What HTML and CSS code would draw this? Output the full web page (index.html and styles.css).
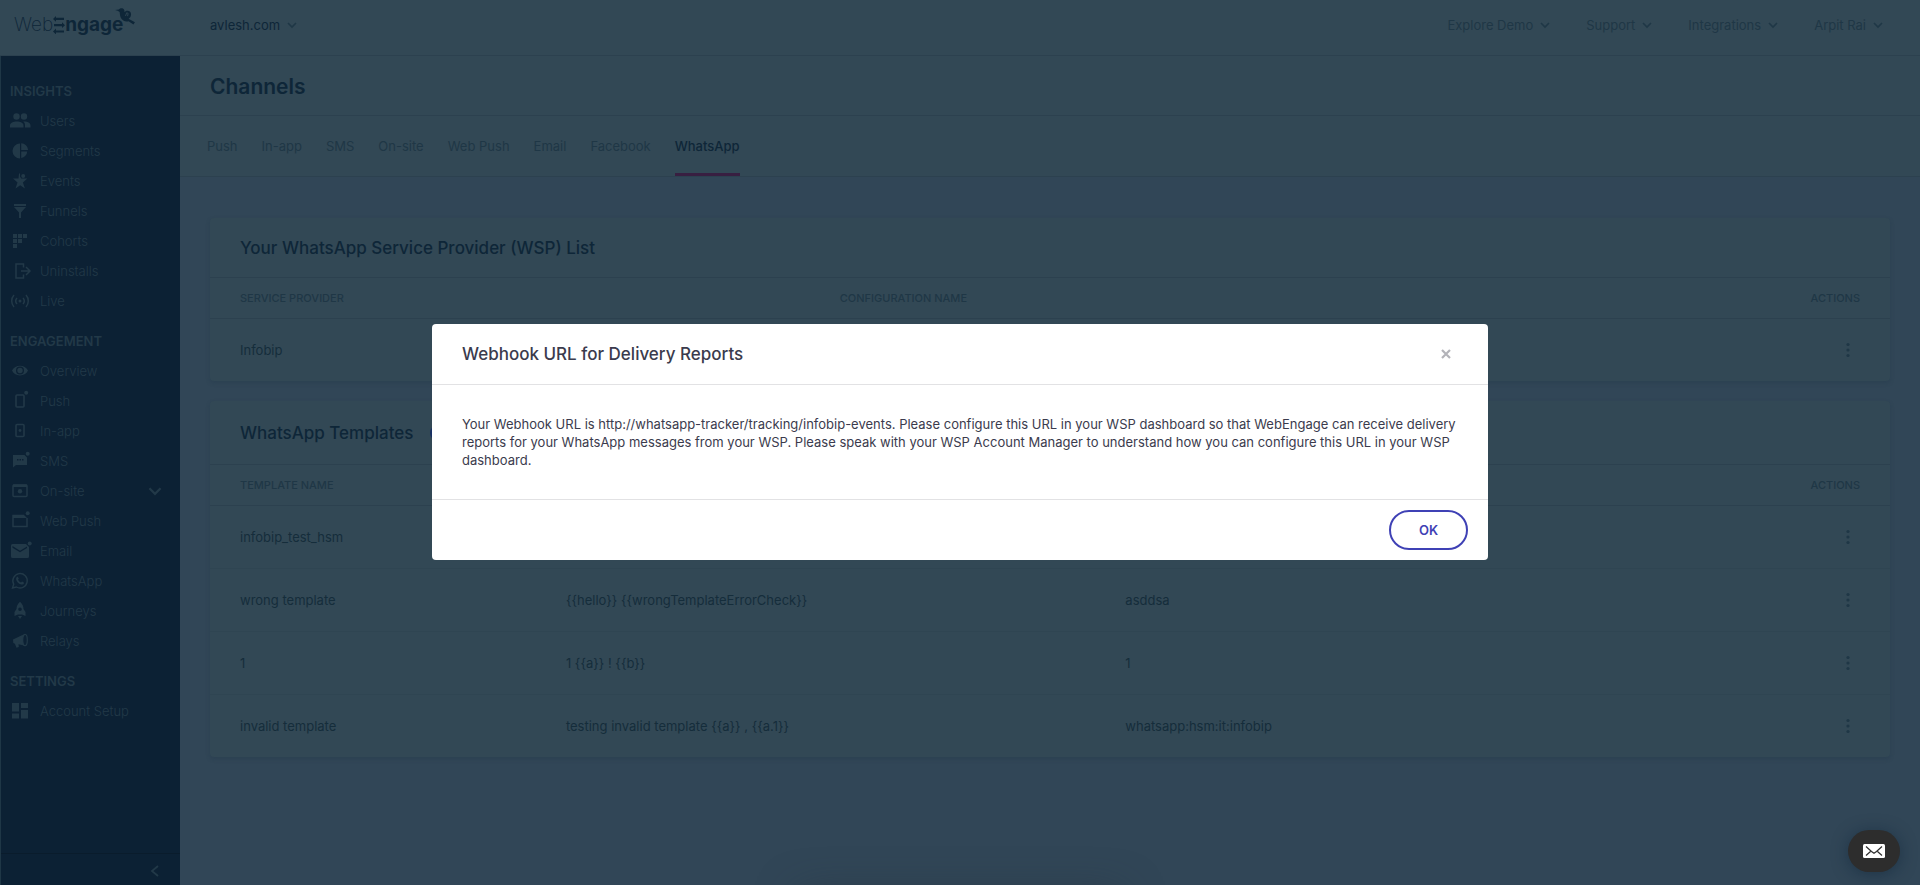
FILE: index.html
```
<!DOCTYPE html>
<html lang="en">
<head>
    <meta charset="UTF-8">
    <meta name="viewport" content="width=device-width, initial-scale=1.0">
    <title>Channels - WebEngage</title>
    <link rel="stylesheet" href="styles.css">
</head>
<body>
    <svg class="sprite" aria-hidden="true">
        <symbol id="chevron" viewBox="0 0 10 10"><path d="M1 3l4 4 4-4" fill="none" stroke="currentColor" stroke-width="1.600"/></symbol>
        <symbol id="dots" viewBox="0 0 4 16"><circle cx="2" cy="2.500" r="1.600"/><circle cx="2" cy="8" r="1.600"/><circle cx="2" cy="13.500" r="1.600"/></symbol>
    </svg>

    <header class="topbar">
        <a class="logo" href="#" aria-label="WebEngage">
            <span class="logo-web">Web</span>
            <svg class="logo-e" viewBox="0 0 12 18"><path d="M3 0v1.800h8v2.200H3v1.800L0 2.900zM9 6.300v1.800H1v2.200h8v1.800l3-2.900zM3 12.600v1.800h8v2.200H3v1.800l-3-2.900z"/></svg>
            <span class="logo-engage">ngage</span>
            <svg class="logo-bird" viewBox="0 0 22 18"><path d="M0 2.200L4 1.600C5 .2 7.200-.3 8.600.7 10 1.700 10 3.200 9.800 4.600 10.500 3.600 11.800 2.900 13.200 3c2.500.1 4 2 3.600 4.300-.2 1.700-1.200 3-2.600 4.200l6.800 3.600-1.600 2.300-5.200-3.500c-2.800.8-5.800 0-7.500-2.400C5.200 9.300 5.100 6.700 4.800 4.300 3.600 3.300 2 2.600 0 2.200z"/><path d="M11 8.500l1.300-3.500 1.500.8-.6 2.800" fill="none" stroke="#324855" stroke-width=".9"/></svg>
        </a>
        <button class="menu site-menu">avlesh.com <svg><use href="#chevron"/></svg></button>
        <nav class="top-nav">
            <button class="menu">Explore Demo <svg><use href="#chevron"/></svg></button>
            <button class="menu">Support <svg><use href="#chevron"/></svg></button>
            <button class="menu">Integrations <svg><use href="#chevron"/></svg></button>
            <button class="menu">Arpit Rai <svg><use href="#chevron"/></svg></button>
        </nav>
    </header>

    <div class="layout">
        <aside class="sidebar">
            <nav>
                <h2>INSIGHTS</h2>
                <a href="#"><svg viewBox="0 0 24 20"><circle cx="8.500" cy="5.500" r="3.200"/><circle cx="16" cy="5.500" r="3.200"/><path d="M2 16.500v-2c0-2.600 3.500-4 6.800-4s6.700 1.400 6.700 4v2zM16 10.500c3.500 0 6.500 1.400 6.500 4v2H17v-2.300c0-1.500-.6-2.700-1.800-3.600z"/></svg>Users</a>
                <a href="#"><svg viewBox="0 0 24 20"><path d="M12 2.500v15a7.500 7.500 0 0 1 0-15zM13.200 2.200a7.500 7.500 0 0 1 7 6.800h-7zM13.200 10.500h6a6.800 6.800 0 0 1-6 6.500z"/></svg>Segments</a>
                <a href="#"><svg viewBox="0 0 24 20"><path d="M11 2.500l-.5 5H5l4.500 4-2 6 4.700-3.300 4.700 3.300-2-6 4.500-4h-6.200L12 5.500V2.500z"/><circle cx="15.200" cy="5" r="2"/></svg>Events</a>
                <a href="#"><svg viewBox="0 0 24 20"><path d="M6 3h12v2H6zM6 6h12l-5 5.500V17h-2v-5.500z"/></svg>Funnels</a>
                <a href="#"><svg viewBox="0 0 24 20"><path d="M5 3h4v4H5zM10 3h4v4h-4zM15 3h4v4h-4zM5 8h4v4H5zM10 8h4v4h-4zM5 13h4v4H5z"/></svg>Cohorts</a>
                <a href="#"><svg viewBox="0 0 24 20"><path d="M15.500 6.500V3H8v14h7.500v-3.500M13 10h8.500M18 6l4 4-4 4" fill="none" stroke="currentColor" stroke-width="1.500"/></svg>Uninstalls</a>
                <a href="#"><svg viewBox="0 0 24 20"><circle cx="12" cy="10" r="1.500"/><path d="M9 7a4.500 4.500 0 0 0 0 6M15 7a4.500 4.500 0 0 1 0 6M6 4a9 9 0 0 0 0 12M18 4a9 9 0 0 1 0 12" fill="none" stroke="currentColor" stroke-width="1.500"/></svg>Live</a>

                <h2>ENGAGEMENT</h2>
                <a href="#"><svg viewBox="0 0 24 20"><path fill-rule="evenodd" d="M4 9.500C7 3 17 3 20 9.500 17 16 7 16 4 9.500zM12 5.500a4 4 0 1 0 0 8 4 4 0 0 0 0-8zm0 1.300a2.700 2.700 0 1 1 0 5.400 2.700 2.700 0 0 1 0-5.400z"/></svg>Overview</a>
                <a href="#"><svg viewBox="0 0 24 20"><rect x="8" y="4" width="8" height="12" rx="1" fill="none" stroke="currentColor" stroke-width="1.600"/><circle cx="18.200" cy="1.800" r="2"/></svg>Push</a>
                <a href="#"><svg viewBox="0 0 24 20"><rect x="8" y="3.500" width="8" height="12" rx="1" fill="none" stroke="currentColor" stroke-width="1.600"/><circle cx="12" cy="9.500" r="1.400"/></svg>In-app</a>
                <a href="#"><svg viewBox="0 0 24 20"><path fill-rule="evenodd" d="M5 4h11.500l2.500 2.500V14H8l-3 2.500zM9 8v1.500h1.500V8zm2.500 0v1.500H13V8zM14 8v1.500h1.500V8z"/><circle cx="19.700" cy="2.800" r="2"/></svg>SMS</a>
                <a href="#"><svg viewBox="0 0 24 20"><rect x="5" y="4" width="14" height="11.500" rx="1" fill="none" stroke="currentColor" stroke-width="1.500"/><path d="M5 3.500h14V6H5z"/><circle cx="12" cy="10.200" r="2.200"/></svg>On-site<svg class="expand"><use href="#chevron"/></svg></a>
                <a href="#"><svg viewBox="0 0 24 20"><path d="M16 4.500H5v11h14V7" fill="none" stroke="currentColor" stroke-width="1.500"/><path d="M5 4h11l3 3H5z"/><circle cx="19.700" cy="2.300" r="2"/></svg>Web Push</a>
                <a href="#"><svg viewBox="0 0 24 20"><path fill-rule="evenodd" d="M4.500 3H18l3 3v9.500q0 1.500-1.500 1.500h-15Q3 17 3 15.500v-11Q3 3 4.500 3zM4.500 5v1.700l7.500 4.600 7-4.300V5.500L12 9.700z"/><circle cx="21.700" cy="2.600" r="2"/></svg>Email</a>
                <a href="#"><svg viewBox="0 0 24 20"><path d="M4.500 17l1.200-3.800A7.200 7.200 0 1 1 8.400 16z" fill="none" stroke="currentColor" stroke-width="1.400"/><path d="M9.500 5.500l1.300 2-.8 1.200q1 2 3 2.900l1.100-1 2 1.100q-.3 2-2.400 1.900-4.600-.8-5.700-5.600.2-1.900 1.500-2.500z"/></svg>WhatsApp</a>
                <a href="#"><svg viewBox="0 0 24 20"><path fill-rule="evenodd" d="M12 .8c2.500 2.200 3.500 4.500 3.500 7.200l2 3v4l-3.500-1.500h-4L6.500 15v-4l2-3c0-2.700 1-5 3.500-7.200zm0 5.700a1.800 1.800 0 1 0 0 3.600 1.800 1.800 0 0 0 0-3.600zM10 15h4l-2 3z"/></svg>Journeys</a>
                <a href="#"><svg viewBox="0 0 24 20"><path d="M5 8.500l10.500-5q-1.500 6 .5 11l-5.500-1.200L10.800 16l-2.300.8-1.600-4.100L5.300 12z"/><ellipse cx="17" cy="9" rx="2.300" ry="5.700" fill="none" stroke="currentColor" stroke-width="1.200"/></svg>Relays</a>

                <h2>SETTINGS</h2>
                <a href="#"><svg viewBox="0 0 24 20"><path d="M4 2h7v8.500H4zM13 2h7v5h-7zM4 12.500h7v5H4zM13 9h7v8.500h-7z"/></svg>Account Setup</a>
            </nav>
            <button class="collapse" aria-label="Collapse sidebar"><svg viewBox="0 0 10 12"><path d="M8 1L2 6l6 5" fill="none" stroke="currentColor" stroke-width="1.800"/></svg></button>
        </aside>

        <main>
            <h1>Channels</h1>
            <nav class="tabs">
                <a href="#">Push</a>
                <a href="#">In-app</a>
                <a href="#">SMS</a>
                <a href="#">On-site</a>
                <a href="#">Web Push</a>
                <a href="#">Email</a>
                <a href="#">Facebook</a>
                <a href="#" class="active">WhatsApp</a>
            </nav>

            <div class="content">
                <section class="card">
                    <h3>Your WhatsApp Service Provider (WSP) List</h3>
                    <table class="providers">
                        <thead>
                            <tr><th>SERVICE PROVIDER</th><th>CONFIGURATION NAME</th><th class="actions">ACTIONS</th></tr>
                        </thead>
                        <tbody>
                            <tr><td>Infobip</td><td></td><td class="actions"><button aria-label="Actions"><svg><use href="#dots"/></svg></button></td></tr>
                        </tbody>
                    </table>
                </section>

                <section class="card templates-card">
                    <h3>WhatsApp Templates <button class="add" aria-label="Add template"></button></h3>
                    <table class="templates">
                        <thead>
                            <tr><th>TEMPLATE NAME</th><th></th><th></th><th class="actions">ACTIONS</th></tr>
                        </thead>
                        <tbody>
                            <tr><td>infobip_test_hsm</td><td></td><td></td><td class="actions"><button aria-label="Actions"><svg><use href="#dots"/></svg></button></td></tr>
                            <tr><td>wrong template</td><td>{{hello}} {{wrongTemplateErrorCheck}}</td><td>asddsa</td><td class="actions"><button aria-label="Actions"><svg><use href="#dots"/></svg></button></td></tr>
                            <tr><td>1</td><td>1 {{a}} ! {{b}}</td><td>1</td><td class="actions"><button aria-label="Actions"><svg><use href="#dots"/></svg></button></td></tr>
                            <tr><td>invalid template</td><td>testing invalid template {{a}} , {{a.1}}</td><td>whatsapp:hsm:it:infobip</td><td class="actions"><button aria-label="Actions"><svg><use href="#dots"/></svg></button></td></tr>
                        </tbody>
                    </table>
                </section>
            </div>
        </main>
    </div>

    <div class="toast"></div>

    <div class="overlay">
        <div class="modal" role="dialog" aria-modal="true" aria-labelledby="modal-title">
            <div class="modal-header">
                <h3 id="modal-title">Webhook URL for Delivery Reports</h3>
                <button class="close" aria-label="Close"><svg viewBox="0 0 10 10"><path d="M1 1l8 8M9 1L1 9" stroke="currentColor" stroke-width="2.200"/></svg></button>
            </div>
            <p class="modal-body">Your Webhook URL is http://whatsapp-tracker/tracking/infobip-events. Please configure this URL in your WSP dashboard so that WebEngage can receive delivery reports for your WhatsApp messages from your WSP. Please speak with your WSP Account Manager to understand how you can configure this URL in your WSP dashboard.</p>
            <div class="modal-footer">
                <button class="ok">OK</button>
            </div>
        </div>
    </div>

    <button class="chat" aria-label="Messages">
        <svg viewBox="0 0 22 14"><rect width="22" height="14" rx="1.500" fill="#fff"/><path d="M3 2.500l5.500 5L11 9.200l2.500-1.700 5.500-5M3 11.500l4.500-4M19 11.500l-4.500-4" fill="none" stroke="#2d2d2d" stroke-width="1.200"/></svg>
    </button>
</body>
</html>
```
FILE: styles.css
```
:root {
    --panel: #324855;
    --page: #314657;
    --navy: #0c2134;
    --line: #2c414f;
    --heading: #0e2638;
    --text: #152d3b;
    --muted: #1f3746;
    --side-text: #223948;
    --primary: #3f41b5;
}

* {
    box-sizing: border-box;
    margin: 0;
    padding: 0;
}

body {
    font-family: Inter, "Liberation Sans", sans-serif;
    font-size: 13px;
    line-height: 18px;
    min-height: 100vh;
    display: flex;
    flex-direction: column;
    background: var(--page);
    color: var(--text);
}

a {
    color: inherit;
    text-decoration: none;
}

button {
    font: inherit;
    color: inherit;
    background: none;
    border: 0;
    cursor: pointer;
}

svg {
    display: block;
    flex: none;
    fill: currentColor;
}

.sprite {
    position: absolute;
    width: 0;
    height: 0;
}

/* top bar */
.topbar {
    display: flex;
    align-items: center;
    height: 56px;
    padding: 0 37px 6px 14px;
    background: var(--panel);
    border-bottom: 1px solid var(--line);
}

.logo {
    position: relative;
    display: flex;
    align-items: center;
    width: 196px;
    color: var(--heading);
    font-size: 19px;
    line-height: 24px;
}

.logo-web {
    font-weight: 200;
}

.logo-e {
    width: 12px;
    height: 18px;
}

.logo-engage {
    font-weight: 700;
}

.logo-bird {
    position: absolute;
    left: 101px;
    top: -5px;
    width: 21px;
    height: 17px;
}

.menu {
    display: flex;
    align-items: center;
    gap: 7px;
    color: var(--muted);
}

.menu svg {
    width: 10px;
    height: 10px;
}

.site-menu {
    color: var(--heading);
}

.site-menu svg {
    color: var(--muted);
}

.top-nav {
    display: flex;
    gap: 36px;
    margin-left: auto;
}

.layout {
    display: flex;
    flex: 1;
}

/* sidebar */
.sidebar {
    display: flex;
    flex-direction: column;
    flex: none;
    width: 180px;
    padding-top: 10px;
    background: var(--navy);
    border-left: 1px solid var(--muted);
    color: var(--side-text);
}

.sidebar h2 {
    height: 30px;
    margin-top: 10px;
    padding-left: 9px;
    font-size: 13px;
    font-weight: 600;
    line-height: 30px;
}

.sidebar a {
    display: flex;
    align-items: center;
    gap: 8px;
    height: 30px;
    padding-left: 7px;
    font-weight: 300;
}

.sidebar a svg {
    width: 24px;
    height: 20px;
    overflow: visible;
}

.sidebar a .expand {
    width: 14px;
    height: 14px;
    margin: 0 18px 0 auto;
}

.collapse {
    display: flex;
    align-items: center;
    justify-content: flex-end;
    height: 32px;
    margin-top: auto;
    padding: 3px 20px 0 0;
    border-top: 1px solid #0a1c2c;
}

.collapse svg {
    width: 10px;
    height: 12px;
}

/* main area */
main {
    flex: 1;
    min-width: 0;
}

h1 {
    height: 60px;
    padding-left: 30px;
    background: var(--panel);
    border-bottom: 1px solid var(--line);
    color: var(--heading);
    font-size: 21px;
    font-weight: 600;
    line-height: 62px;
}

.tabs {
    display: flex;
    gap: 24px;
    height: 61px;
    padding-left: 27px;
    background: var(--panel);
    border-bottom: 1px solid var(--line);
    color: var(--muted);
    line-height: 60px;
}

.tabs .active {
    border-bottom: 3px solid #381f41;
    color: var(--heading);
    font-weight: 500;
}

.content {
    display: flex;
    flex-direction: column;
    gap: 20px;
    padding: 41px 30px;
}

.card {
    background: var(--panel);
    border-radius: 4px;
    box-shadow: 0 2px 4px rgba(30, 52, 68, 0.3);
}

.card h3 {
    display: flex;
    align-items: center;
    gap: 17px;
    height: 60px;
    padding-left: 30px;
    border-bottom: 1px solid var(--line);
    color: var(--heading);
    font-size: 17px;
    font-weight: 500;
}

.templates-card h3 {
    height: 64px;
}

.add {
    width: 18px;
    height: 18px;
    border: 2px solid #183064;
    border-radius: 50%;
}

table {
    width: 100%;
    border-collapse: collapse;
    table-layout: fixed;
}

th {
    height: 40px;
    padding-left: 30px;
    border-bottom: 1px solid var(--line);
    color: var(--muted);
    font-size: 11px;
    font-weight: 500;
    text-align: left;
}

td {
    height: 63px;
    padding-left: 30px;
}

tbody tr + tr td {
    border-top: 1px solid #2f4552;
}

.providers th:first-child {
    width: 35.7%;
}

.templates th:first-child {
    width: 19.4%;
}

.templates th:nth-child(2) {
    width: 33.3%;
}

th.actions {
    padding-right: 30px;
    text-align: right;
}

td.actions {
    padding-right: 36px;
}

.actions button {
    display: flex;
    justify-content: center;
    width: 12px;
    margin-left: auto;
    color: var(--muted);
}

.actions svg {
    width: 4px;
    height: 16px;
}

.toast {
    position: fixed;
    left: 50%;
    bottom: -50px;
    width: 320px;
    height: 40px;
    margin-left: -160px;
    box-shadow: 0 0 40px rgba(40, 54, 64, 0.6);
}

/* modal */
.overlay {
    position: fixed;
    inset: 0;
    display: flex;
    align-items: center;
    justify-content: center;
    padding-bottom: 1px;
}

.modal {
    width: 55%;
    background: #fff;
    border-radius: 4px;
    color: #3b3b4d;
}

.modal-header {
    display: flex;
    align-items: center;
    justify-content: space-between;
    height: 61px;
    padding: 0 36px 0 30px;
    border-bottom: 1px solid #e2e2e4;
}

.modal-header h3 {
    font-size: 17px;
    font-weight: 500;
}

.close {
    display: flex;
    padding: 1px;
    color: #b3b3b9;
}

.close svg {
    width: 10px;
    height: 10px;
}

.modal-body {
    padding: 30px;
}

.modal-footer {
    display: flex;
    justify-content: flex-end;
    padding: 10px 20px;
    border-top: 1px solid #e2e2e4;
}

.ok {
    width: 79px;
    height: 40px;
    border: 2px solid var(--primary);
    border-radius: 20px;
    color: var(--primary);
    font-weight: 600;
}

.chat {
    position: fixed;
    right: 20px;
    bottom: 13px;
    display: flex;
    align-items: center;
    justify-content: center;
    width: 52px;
    height: 42px;
    border-radius: 21px;
    background: #2d2d2d;
    box-shadow: 0 2px 16px rgba(12, 33, 53, 0.5);
}

.chat svg {
    width: 22px;
    height: 14px;
}
```
